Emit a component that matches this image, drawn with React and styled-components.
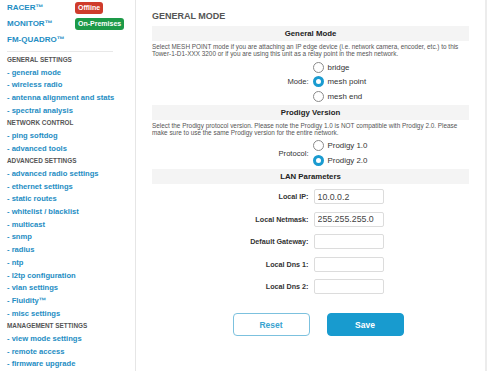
import React from 'react';
import styled, {createGlobalStyle} from 'styled-components';

const GlobalStyle = createGlobalStyle`
  html, body {
    margin: 0;
    padding: 0;
    background: #fff;
    font-family: "Liberation Sans", Arial, sans-serif;
  }
  * { box-sizing: border-box; }
`;

const brands = [
  {name: 'RACER™', badge: 'Offline', tone: 'red'},
  {name: 'MONITOR™', badge: 'On-Premises', tone: 'green'},
  {name: 'FM-QUADRO™'},
];

const menu = [
  {title: 'General Settings', links: ['general mode', 'wireless radio', 'antenna alignment and stats', 'spectral analysis']},
  {title: 'Network Control', links: ['ping softdog', 'advanced tools']},
  {title: 'Advanced Settings', links: ['advanced radio settings', 'ethernet settings', 'static routes', 'whitelist / blacklist', 'multicast', 'snmp', 'radius', 'ntp', 'l2tp configuration', 'vlan settings', 'Fluidity™', 'misc settings']},
  {title: 'Management Settings', links: ['view mode settings', 'remote access', 'firmware upgrade']},
];

const lanFields = [
  {label: 'Local IP:', value: '10.0.0.2'},
  {label: 'Local Netmask:', value: '255.255.255.0'},
  {label: 'Default Gateway:', value: ''},
  {label: 'Local Dns 1:', value: ''},
  {label: 'Local Dns 2:', value: ''},
];

const App = () => {
  return (
    <Page>
      <GlobalStyle />
      <Sidebar>
        {brands.map(b => (
          <BrandRow key={b.name}>
            <BrandName>{b.name}</BrandName>
            {b.badge && <Badge tone={b.tone}>{b.badge}</Badge>}
          </BrandRow>
        ))}
        <Divider />
        {menu.map(group => (
          <React.Fragment key={group.title}>
            <MenuTitle>{group.title}</MenuTitle>
            {group.links.map(l => <MenuLink key={l}>- {l}</MenuLink>)}
          </React.Fragment>
        ))}
      </Sidebar>

      <Main>
        <Heading>GENERAL MODE</Heading>

        <SectionBar>General Mode</SectionBar>
        <Description>
          Select MESH POINT mode if you are attaching an IP edge device (i.e. network camera, encoder, etc.) to this<br />
          Tower-1-D1-XXX 3200 or if you are using this unit as a relay point in the mesh network.
        </Description>
        <FieldGrid>
          <FieldLabel>Mode:</FieldLabel>
          <RadioList>
            <Radio label="bridge" />
            <Radio label="mesh point" checked />
            <Radio label="mesh end" />
          </RadioList>
        </FieldGrid>

        <SectionBar>Prodigy Version</SectionBar>
        <Description>
          Select the Prodigy protocol version. Please note the Prodigy 1.0 is NOT compatible with Prodigy 2.0. Please<br />
          make sure to use the same Prodigy version for the entire network.
        </Description>
        <FieldGrid>
          <FieldLabel>Protocol:</FieldLabel>
          <RadioList>
            <Radio label="Prodigy 1.0" />
            <Radio label="Prodigy 2.0" checked />
          </RadioList>
        </FieldGrid>

        <SectionBar>LAN Parameters</SectionBar>
        <InputList>
          {lanFields.map(f => (
            <FieldGrid key={f.label}>
              <InputLabel>{f.label}</InputLabel>
              <TextInput defaultValue={f.value} />
            </FieldGrid>
          ))}
        </InputList>

        <Actions>
          <Button>Reset</Button>
          <Button primary>Save</Button>
        </Actions>
      </Main>
      <ScrollTrack />
    </Page>
  );
};

const Radio = ({label, checked}) => (
  <RadioRow>
    <RadioDot checked={checked} />
    <span>{label}</span>
  </RadioRow>
);

export default App;

const Page = styled.div`
  display: flex;
  width: 487px;
  height: 371px;
  overflow: hidden;
`;

const Sidebar = styled.nav`
  width: 136px;
  flex-shrink: 0;
  border-right: 1px solid #e6e6e6;
  padding-left: 7px;
  display: flex;
  flex-direction: column;
`;

const BrandRow = styled.div`
  display: grid;
  grid-template-columns: 68px auto;
  align-items: center;
  height: 16.5px;
`;

const BrandName = styled.span`
  font-size: 8px;
  font-weight: bold;
  color: #1e8dc3;
`;

const Badge = styled.span`
  justify-self: start;
  font-size: 7px;
  font-weight: bold;
  color: #fff;
  line-height: 12px;
  padding: 0 3px;
  border-radius: 3px;
  background: ${p => (p.tone === 'red' ? '#cf3b2b' : '#1d9a48')};
`;

const Divider = styled.hr`
  width: 106px;
  border: 0;
  border-top: 1px solid #e8e8e8;
  margin: 3.5px 0 1.7px;
`;

const MenuTitle = styled.div`
  font-size: 6.4px;
  font-weight: bold;
  text-transform: uppercase;
  color: #555;
  line-height: 12.68px;
  white-space: nowrap;
`;

const MenuLink = styled.a`
  display: block;
  font-size: 7.6px;
  font-weight: bold;
  color: #1e8dc3;
  line-height: 12.68px;
  white-space: nowrap;
`;

const Main = styled.main`
  flex: 1;
  padding: 10px 16px 0;
  display: flex;
  flex-direction: column;
`;

const Heading = styled.h1`
  margin: 0 0 4px;
  font-size: 9px;
  line-height: 12px;
  font-weight: bold;
  color: #555;
`;

const SectionBar = styled.div`
  height: 15px;
  background: #f4f4f4;
  text-align: center;
  font-size: 7.8px;
  font-weight: bold;
  line-height: 15px;
  color: #222;
`;

const Description = styled.p`
  margin: 0;
  padding: 2px 0;
  font-size: 6.4px;
  line-height: 7px;
  color: #555;
  white-space: nowrap;
`;

const FieldGrid = styled.div`
  display: grid;
  grid-template-columns: 1fr 1fr;
  column-gap: 4px;
  align-items: center;
`;

const FieldLabel = styled.span`
  text-align: right;
  font-size: 7.6px;
  color: #333;
`;

const RadioList = styled.div`
  display: flex;
  flex-direction: column;
  margin: 1px 0;
`;

const RadioRow = styled.label`
  display: flex;
  align-items: center;
  gap: 4px;
  height: 14.5px;
  font-size: 7.9px;
  color: #333;
`;

const RadioDot = styled.span`
  width: 11px;
  height: 11px;
  border-radius: 50%;
  border: ${p => (p.checked ? '3.5px solid #1a9bd0' : '1px solid #8a8a8a')};
  background: #fff;
  box-sizing: border-box;
`;

const InputList = styled.div`
  display: flex;
  flex-direction: column;
  gap: 7.5px;
  padding-top: 5.5px;
`;

const InputLabel = styled.span`
  text-align: right;
  font-size: 7.2px;
  font-weight: bold;
  color: #333;
`;

const TextInput = styled.input`
  width: 70px;
  height: 15px;
  margin-left: 1px;
  border: 1px solid #dcdcdc;
  border-radius: 2px;
  padding: 0 3px;
  font-family: "Liberation Sans", Arial, sans-serif;
  font-size: 8.8px;
  color: #444;
  outline: none;
`;

const Actions = styled.div`
  display: flex;
  justify-content: center;
  gap: 17px;
  margin-top: 19px;
  padding-left: 15px;
`;

const Button = styled.button`
  width: 77px;
  height: 23px;
  border-radius: 4px;
  font-family: "Liberation Sans", Arial, sans-serif;
  font-size: 8.5px;
  font-weight: bold;
  border: 1px solid ${p => (p.primary ? '#189bcf' : '#7cc1de')};
  background: ${p => (p.primary ? '#189bcf' : '#fff')};
  color: ${p => (p.primary ? '#fff' : '#3aa3d0')};
`;

const ScrollTrack = styled.div`
  width: 2px;
  flex-shrink: 0;
  background: #ececec;
`;
